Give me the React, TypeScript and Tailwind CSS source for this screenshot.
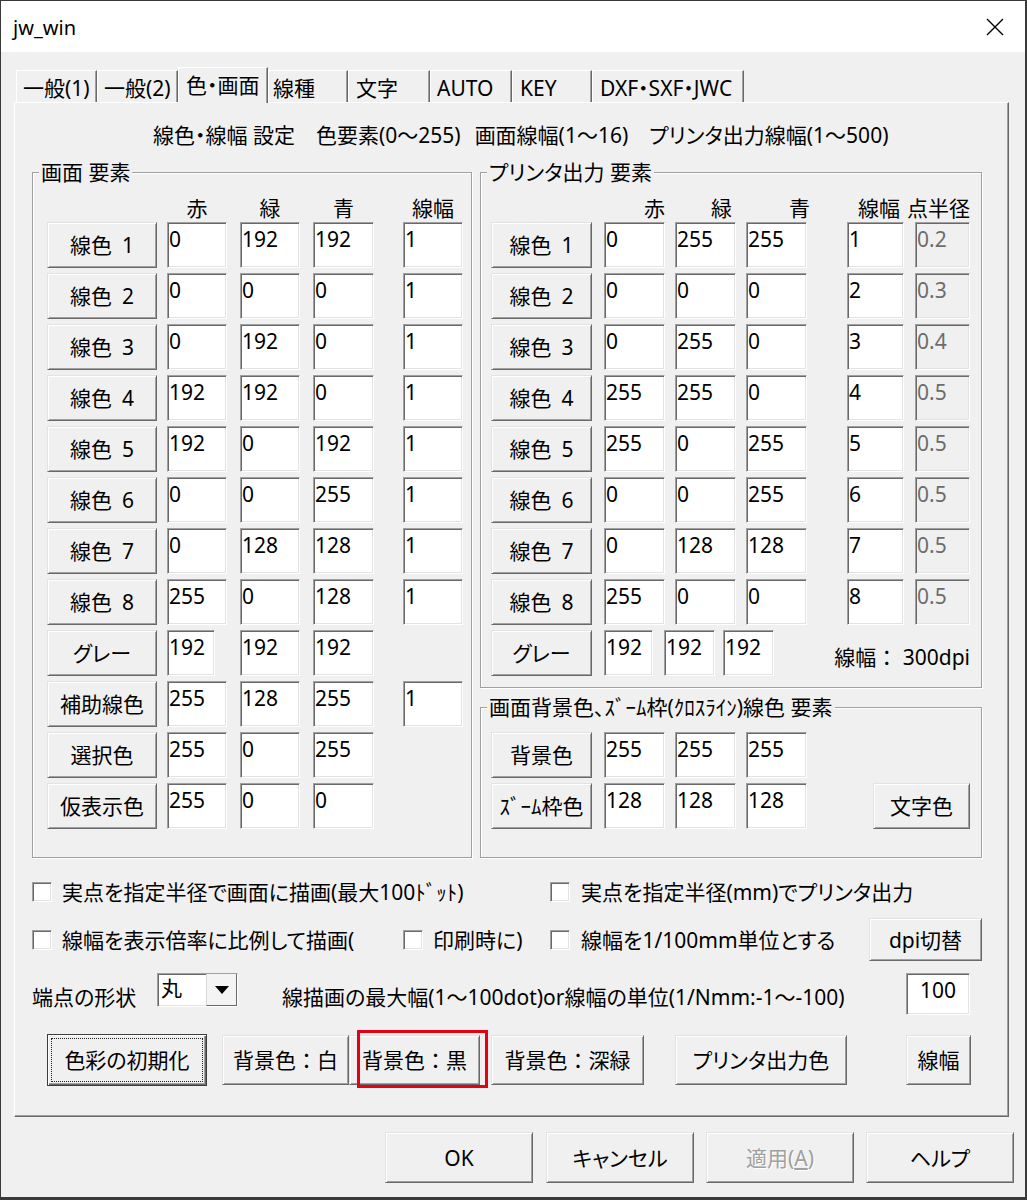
import React from "react";

const FONT = "font-['Noto_Sans','Noto_Sans_CJK_JP',sans-serif]";
const RAISED =
  "bg-[#f0f0f0] border border-t-[#e3e3e3] border-l-[#e3e3e3] border-r-[#696969] border-b-[#696969] shadow-[inset_1px_1px_0_#ffffff,inset_-1px_-1px_0_#a0a0a0]";
const SUNKEN =
  "border border-t-[#a0a0a0] border-l-[#a0a0a0] border-r-white border-b-white shadow-[inset_1px_1px_0_#696969,inset_-1px_-1px_0_#e3e3e3]";
const GROUP =
  "border border-[#a0a0a0] shadow-[1px_1px_0_#ffffff,inset_1px_1px_0_#ffffff]";

function F({ children }: { children: React.ReactNode }) {
  return <span className="[font-feature-settings:normal]">{children}</span>;
}

function Btn({
  w,
  h = "h-[46px]",
  children,
  className = "",
}: {
  w: string;
  h?: string;
  children: React.ReactNode;
  className?: string;
}) {
  return (
    <div className={`${RAISED} ${w} ${h} flex items-center justify-center shrink-0 ${className}`}>
      {children}
    </div>
  );
}

function Inp({
  w,
  v,
  ml = "",
  disabled = false,
}: {
  w: string;
  v: string;
  ml?: string;
  disabled?: boolean;
}) {
  return (
    <div
      className={`${SUNKEN} ${w} ${ml} h-[46px] shrink-0 pl-[1px] pt-[3px] ${
        disabled ? "bg-[#f0f0f0] text-[#6d6d6d]" : "bg-white"
      }`}
    >
      {v}
    </div>
  );
}

function Check() {
  return <div className={`${SUNKEN} w-[20px] h-[20px] bg-white shrink-0`} />;
}

function Tab({ w, label, selected = false, pl = "pl-[6px]" }: { w: string; label: string; selected?: boolean; pl?: string }) {
  return (
    <div
      className={`${w} ${pl} ${
        selected ? "h-[36px]" : "h-[32px] mb-[1px]"
      } shrink-0 bg-[#f0f0f0] border-t border-l border-r border-t-white border-l-white border-r-[#696969] shadow-[inset_-1px_0_0_#a0a0a0] pt-[4px]`}
    >
      {label}
    </div>
  );
}

function LineLabel({ n }: { n: number }) {
  return (
    <>
      <span>線色</span>
      <span className="ml-[10px]">{n}</span>
    </>
  );
}

const leftRows = [
  ["0", "192", "192", "1"],
  ["0", "0", "0", "1"],
  ["0", "192", "0", "1"],
  ["192", "192", "0", "1"],
  ["192", "0", "192", "1"],
  ["0", "0", "255", "1"],
  ["0", "128", "128", "1"],
  ["255", "0", "128", "1"],
];

const rightRows = [
  ["0", "255", "255", "1", "0.2"],
  ["0", "0", "0", "2", "0.3"],
  ["0", "255", "0", "3", "0.4"],
  ["255", "255", "0", "4", "0.5"],
  ["255", "0", "255", "5", "0.5"],
  ["0", "0", "255", "6", "0.5"],
  ["0", "128", "128", "7", "0.5"],
  ["255", "0", "0", "8", "0.5"],
];

export default function App() {
  return (
    <div
      className={`${FONT} w-[1027px] h-[1200px] bg-[#f0f0f0] border-l border-t border-r-2 border-b-[3px] border-[#3a3a3a] text-[21px] leading-[26px] text-black whitespace-nowrap [font-feature-settings:'palt'] flex flex-col`}
    >
      {/* Title bar */}
      <div className="h-[51px] bg-white flex items-center justify-between pl-[12px] pr-[21px] shrink-0">
        <span className="text-[20px] pt-[2px]">jw_win</span>
        <svg width="18" height="18" viewBox="0 0 18 18" className="mt-[1px]">
          <path d="M1 1L17 17M17 1L1 17" stroke="#000" strokeWidth="1.4" />
        </svg>
      </div>

      {/* Tabs */}
      <div className="relative z-10 flex items-end h-[36px] mt-[15px] pl-[15px] shrink-0">
        <Tab w="w-[81px]" label="一般(1)" />
        <Tab w="w-[81px]" label="一般(2)" />
        <Tab w="w-[90px]" label="色・画面" selected pl="pl-[7px]" />
        <Tab w="w-[80px]" label="線種" pl="pl-[4px]" />
        <Tab w="w-[82px]" label="文字" pl="pl-[7px]" />
        <Tab w="w-[82px]" label="AUTO" />
        <Tab w="w-[80px]" label="KEY" pl="pl-[7px]" />
        <Tab w="w-[152px]" label="DXF・SXF・JWC" pl="pl-[7px]" />
      </div>

      {/* Panel */}
      <div className="ml-[13px] -mt-[1px] w-[995px] h-[1015px] shrink-0 border border-t-white border-l-white border-r-[#696969] border-b-[#696969] shadow-[inset_-1px_-1px_0_#a0a0a0] flex flex-col">
        {/* header */}
        <div className="mt-[19px] pl-[138px] flex">
          <span>線色・線幅 設定</span>
          <span className="ml-[21px]">
            色要素(0<F>～</F>255)
          </span>
          <span className="ml-[14px]">
            画面線幅(1<F>～</F>16)
          </span>
          <span className="ml-[21px]">
            プリンタ出力線幅(1<F>～</F>500)
          </span>
        </div>

        {/* groups */}
        <div className="mt-[11px] flex items-start">
          {/* Left group */}
          <fieldset className={`${GROUP} ml-[17px] w-[440px] h-[699px] shrink-0`}>
            <legend className="ml-[6px] px-[2px] leading-[26px] bg-[#f0f0f0]">画面 要素</legend>
            <div className="pt-[10px] pl-[14px]">
              <div className="flex h-[26px]">
                <div className="w-[110px]" />
                <div className="w-[60px] ml-[10px] text-center">赤</div>
                <div className="w-[60px] ml-[13px] text-center">緑</div>
                <div className="w-[61px] ml-[13px] text-center">青</div>
                <div className="w-[60px] ml-[29px] text-center">線幅</div>
              </div>
              <div className="mt-[1px] flex flex-col gap-[5px]">
                {leftRows.map((r, i) => (
                  <div key={i} className="flex h-[46px]">
                    <Btn w="w-[110px]">
                      <LineLabel n={i + 1} />
                    </Btn>
                    <Inp w="w-[60px]" ml="ml-[10px]" v={r[0]} />
                    <Inp w="w-[60px]" ml="ml-[13px]" v={r[1]} />
                    <Inp w="w-[61px]" ml="ml-[13px]" v={r[2]} />
                    <Inp w="w-[60px]" ml="ml-[29px]" v={r[3]} />
                  </div>
                ))}
                <div className="flex h-[46px]">
                  <Btn w="w-[110px]">グレー</Btn>
                  <Inp w="w-[48px]" ml="ml-[10px]" v="192" />
                  <Inp w="w-[60px]" ml="ml-[25px]" v="192" />
                  <Inp w="w-[61px]" ml="ml-[13px]" v="192" />
                </div>
                <div className="flex h-[46px]">
                  <Btn w="w-[110px]">補助線色</Btn>
                  <Inp w="w-[60px]" ml="ml-[10px]" v="255" />
                  <Inp w="w-[60px]" ml="ml-[13px]" v="128" />
                  <Inp w="w-[61px]" ml="ml-[13px]" v="255" />
                  <Inp w="w-[60px]" ml="ml-[29px]" v="1" />
                </div>
                <div className="flex h-[46px]">
                  <Btn w="w-[110px]">選択色</Btn>
                  <Inp w="w-[60px]" ml="ml-[10px]" v="255" />
                  <Inp w="w-[60px]" ml="ml-[13px]" v="0" />
                  <Inp w="w-[61px]" ml="ml-[13px]" v="255" />
                </div>
                <div className="flex h-[46px]">
                  <Btn w="w-[110px]">仮表示色</Btn>
                  <Inp w="w-[60px]" ml="ml-[10px]" v="255" />
                  <Inp w="w-[60px]" ml="ml-[13px]" v="0" />
                  <Inp w="w-[61px]" ml="ml-[13px]" v="0" />
                </div>
              </div>
            </div>
          </fieldset>

          {/* Right column */}
          <div className="ml-[8px] w-[502px] flex flex-col shrink-0">
            <fieldset className={`${GROUP} w-[502px] h-[529px]`}>
              <legend className="ml-[6px] px-[2px] leading-[26px] bg-[#f0f0f0]">プリンタ出力 要素</legend>
              <div className="pt-[10px] pl-[10px]">
                <div className="flex h-[26px]">
                  <div className="w-[101px]" />
                  <div className="w-[61px] ml-[12px] text-right">赤</div>
                  <div className="w-[61px] ml-[10px] text-right pr-[4px]">緑</div>
                  <div className="w-[61px] ml-[10px] flex justify-end">
                    <span className="-mr-[3px]">青</span>
                  </div>
                  <div className="w-[57px] ml-[40px] text-right pr-[4px]">線幅</div>
                  <div className="w-[55px] ml-[11px] flex justify-end">点半径</div>
                </div>
                <div className="mt-[1px] flex flex-col gap-[5px]">
                  {rightRows.map((r, i) => (
                    <div key={i} className="flex h-[46px]">
                      <Btn w="w-[101px]">
                        <LineLabel n={i + 1} />
                      </Btn>
                      <Inp w="w-[61px]" ml="ml-[12px]" v={r[0]} />
                      <Inp w="w-[61px]" ml="ml-[10px]" v={r[1]} />
                      <Inp w="w-[61px]" ml="ml-[10px]" v={r[2]} />
                      <Inp w="w-[57px]" ml="ml-[40px]" v={r[3]} />
                      <Inp w="w-[55px]" ml="ml-[11px]" v={r[4]} disabled />
                    </div>
                  ))}
                  <div className="flex h-[46px]">
                    <Btn w="w-[101px]">グレー</Btn>
                    <Inp w="w-[49px]" ml="ml-[12px]" v="192" />
                    <Inp w="w-[51px]" ml="ml-[11px]" v="192" />
                    <Inp w="w-[51px]" ml="ml-[8px]" v="192" />
                    <div className="flex-1 text-right pr-[11px] mt-[14px]">
                      線幅<F>：</F> 300dpi
                    </div>
                  </div>
                </div>
              </div>
            </fieldset>

            <fieldset className={`${GROUP} mt-[6px] w-[502px] h-[164px]`}>
              <legend className="ml-[6px] px-[2px] leading-[26px] bg-[#f0f0f0]">
                画面背景色、ｽﾞｰﾑ枠(ｸﾛｽﾗｲﾝ)線色 要素
              </legend>
              <div className="pt-[12px] pl-[10px] flex flex-col gap-[5px]">
                <div className="flex h-[46px]">
                  <Btn w="w-[101px]">背景色</Btn>
                  <Inp w="w-[61px]" ml="ml-[12px]" v="255" />
                  <Inp w="w-[61px]" ml="ml-[10px]" v="255" />
                  <Inp w="w-[61px]" ml="ml-[10px]" v="255" />
                </div>
                <div className="flex h-[46px]">
                  <Btn w="w-[101px]">ｽﾞｰﾑ枠色</Btn>
                  <Inp w="w-[61px]" ml="ml-[12px]" v="128" />
                  <Inp w="w-[61px]" ml="ml-[10px]" v="128" />
                  <Inp w="w-[61px]" ml="ml-[10px]" v="128" />
                  <Btn w="w-[97px]" className="ml-auto mr-[11px]">
                    文字色
                  </Btn>
                </div>
              </div>
            </fieldset>
          </div>
        </div>

        {/* checkbox row 1 */}
        <div className="mt-[21px] h-[26px] flex items-center">
          <div className="w-[535px] pl-[17px] flex items-center shrink-0">
            <Check />
            <span className="ml-[10px]">実点を指定半径で画面に描画(最大100ﾄﾞｯﾄ)</span>
          </div>
          <Check />
          <span className="ml-[11px]">実点を指定半径(mm)でプリンタ出力</span>
        </div>

        {/* checkbox row 2 */}
        <div className="mt-[13px] h-[43px] flex items-center">
          <div className="w-[388px] pl-[17px] flex items-center shrink-0">
            <Check />
            <span className="ml-[10px]">線幅を表示倍率に比例して描画(</span>
          </div>
          <div className="w-[147px] flex items-center shrink-0">
            <Check />
            <span className="ml-[10px]">印刷時に)</span>
          </div>
          <div className="w-[319px] flex items-center shrink-0">
            <Check />
            <span className="ml-[11px]">線幅を1/100mm単位とする</span>
          </div>
          <Btn w="w-[113px]" h="h-[43px]">
            dpi切替
          </Btn>
        </div>

        {/* row 3 */}
        <div className="mt-[12px] h-[42px] flex items-start">
          <div className="w-[142px] pl-[17px] mt-[11px] shrink-0">端点の形状</div>
          <div className={`${SUNKEN} w-[81px] h-[34px] bg-white flex shrink-0`}>
            <div className="flex-1 pl-[3px] pt-[1px]">丸</div>
            <div className="w-[31px] h-full border-l border-r border-b border-l-[#d8d8d8] border-r-[#696969] border-b-[#696969] bg-[#f4f4f4] flex items-center justify-center">
              <svg width="14" height="8" viewBox="0 0 14 8">
                <path d="M0 0H14L7 8Z" fill="#000" />
              </svg>
            </div>
          </div>
          <div className="w-[624px] ml-[44px] mt-[11px] shrink-0">
            線描画の最大幅(1<F>～</F>100dot)or線幅の単位(1/Nmm:-1<F>～</F>-100)
          </div>
          <div className={`${SUNKEN} w-[64px] h-[42px] bg-white text-center pt-[3px] shrink-0`}>100</div>
        </div>

        {/* row 4 */}
        <div className="mt-[20px] h-[50px] flex items-center">
          <div className="ml-[32px] w-[160px] h-[52px] shrink-0 flex border border-[#3c3c3c] bg-[#f0f0f0] shadow-[inset_1px_1px_0_#ffffff,inset_-1px_-1px_0_#696969,inset_-2px_-2px_0_#a0a0a0]">
            <div className="m-[3px] flex-1 border border-dotted border-[#222] flex items-center justify-center">
              色彩の初期化
            </div>
          </div>
          <Btn w="w-[127px]" h="h-[50px]" className="ml-[15px]">
            背景色<F>：</F>白
          </Btn>
          <Btn w="w-[131px]" h="h-[50px]" className="relative">
            背景色<F>：</F>黒
            <span className="absolute left-[7px] -right-[9px] -top-[6px] -bottom-[4px] border-[3px] border-[#e60012] pointer-events-none" />
          </Btn>
          <Btn w="w-[153px]" h="h-[50px]" className="ml-[11px]">
            背景色<F>：</F>深緑
          </Btn>
          <Btn w="w-[172px]" h="h-[50px]" className="ml-[31px]">
            プリンタ出力色
          </Btn>
          <Btn w="w-[65px]" h="h-[50px]" className="ml-[59px]">
            線幅
          </Btn>
        </div>
      </div>

      {/* Bottom buttons */}
      <div className="mt-[15px] pl-[384px] flex">
        <Btn w="w-[148px]" h="h-[51px]">
          OK
        </Btn>
        <Btn w="w-[148px]" h="h-[51px]" className="ml-[13px]">
          キャンセル
        </Btn>
        <Btn w="w-[148px]" h="h-[51px]" className="ml-[12px] text-[#a0a0a0] [text-shadow:1px_1px_0_#ffffff]">
          適用(<span className="underline">A</span>)
        </Btn>
        <Btn w="w-[148px]" h="h-[51px]" className="ml-[12px]">
          ヘルプ
        </Btn>
      </div>
    </div>
  );
}
